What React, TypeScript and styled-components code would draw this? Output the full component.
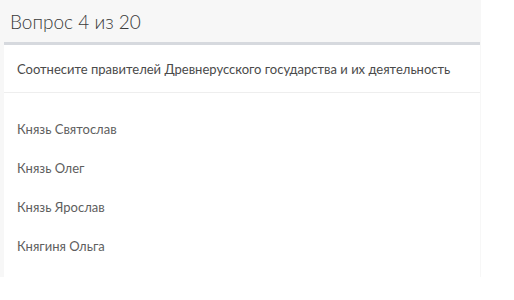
import React from 'react';
import styled, { createGlobalStyle } from 'styled-components';

const GlobalStyle = createGlobalStyle`
  body {
    margin: 0;
    background: #ffffff;
    font-family: Lato, "Open Sans", Arial, sans-serif;
  }
`;

const Panel = styled.div`
  width: 481px;
  background: #f7f7f7;
`;

const Header = styled.div`
  height: 42px;
  display: flex;
  align-items: center;
  padding-left: 10px;
  font-size: 19px;
  font-weight: 300;
  color: #3a3a3a;
`;

const Card = styled.div`
  margin-left: 4px;
  margin-right: 1px;
  border-top: 3px solid #d6d9de;
  background: #ffffff;
  height: 232px;
`;

const Question = styled.div`
  height: 47px;
  display: flex;
  align-items: center;
  padding-left: 13px;
  font-size: 13px;
  color: #4a4a4a;
  border-bottom: 1px solid #eeeeee;
`;

const List = styled.div`
  display: flex;
  flex-direction: column;
  padding-top: 16px;
`;

const Item = styled.div`
  height: 39px;
  display: flex;
  align-items: center;
  padding-left: 13px;
  font-size: 13px;
  color: #5e5e5e;
`;

const rulers = ['Князь Святослав', 'Князь Олег', 'Князь Ярослав', 'Княгиня Ольга'];

const App = () => (
  <>
    <GlobalStyle />
    <Panel>
      <Header>Вопрос 4 из 20</Header>
      <Card>
        <Question>Соотнесите правителей Древнерусского государства и их деятельность</Question>
        <List>
          {rulers.map((name) => (
            <Item key={name}>{name}</Item>
          ))}
        </List>
      </Card>
    </Panel>
  </>
);

export default App;
